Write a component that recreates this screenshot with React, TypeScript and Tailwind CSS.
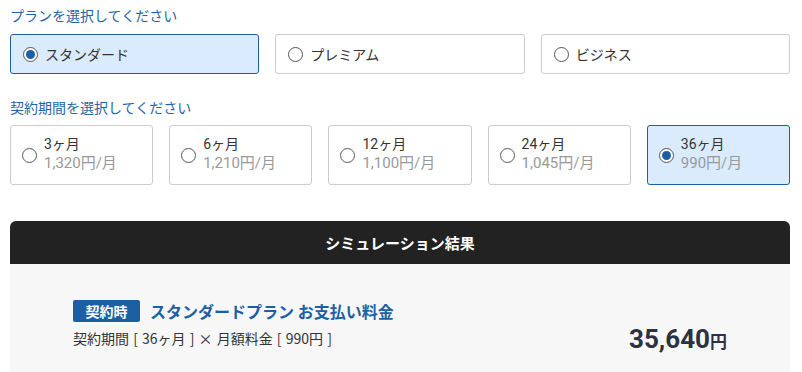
import React from "react";

const font = { fontFamily: '"Noto Sans CJK JP", "Noto Sans", sans-serif' };
const roboto = { fontFamily: '"Roboto", "Noto Sans CJK JP", sans-serif' };

function Radio({ checked }: { checked: boolean }) {
  return (
    <span className="flex h-[15px] w-[15px] shrink-0 items-center justify-center rounded-full border border-[#555] bg-white">
      {checked && <span className="h-[9px] w-[9px] rounded-full bg-[#1c5fa3]" />}
    </span>
  );
}

const plans = [
  { label: "スタンダード", checked: true },
  { label: "プレミアム", checked: false },
  { label: "ビジネス", checked: false },
];

const periods = [
  { label: "3ヶ月", price: "1,320円/月", checked: false },
  { label: "6ヶ月", price: "1,210円/月", checked: false },
  { label: "12ヶ月", price: "1,100円/月", checked: false },
  { label: "24ヶ月", price: "1,045円/月", checked: false },
  { label: "36ヶ月", price: "990円/月", checked: true },
];

export default function App() {
  return (
    <div className="w-[802px] h-[372px] overflow-hidden bg-white pl-[10px] pt-[5px]" style={font}>
      <div className="w-[780px]">
        <div className="text-[14px] leading-[20px] text-[#1f64a8]">プランを選択してください</div>
        <div className="mt-[9px] grid grid-cols-3 gap-[16px]">
          {plans.map((p) => (
            <div
              key={p.label}
              className={`flex h-[40px] items-center gap-[7px] rounded-[3px] border pl-[12px] text-[14px] leading-[20px] text-[#333] ${
                p.checked ? "border-[#1c5fa3] bg-[#d9ebfc]" : "border-[#ccc] bg-white"
              }`}
            >
              <Radio checked={p.checked} />
              <span>{p.label}</span>
            </div>
          ))}
        </div>

        <div className="mt-[23px] text-[14px] leading-[20px] text-[#1f64a8]">契約期間を選択してください</div>
        <div className="mt-[8px] grid grid-cols-5 gap-[16px]">
          {periods.map((p) => (
            <div
              key={p.label}
              className={`flex h-[60px] items-center gap-[7px] rounded-[3px] border pl-[11px] ${
                p.checked ? "border-[#1c5fa3] bg-[#d9ebfc]" : "border-[#ccc] bg-white"
              }`}
              style={roboto}
            >
              <Radio checked={p.checked} />
              <div className="flex flex-col -mt-[2px]">
                <span className="text-[14px] leading-[18px] text-[#333]">{p.label}</span>
                <span className="text-[15px] leading-[20px] text-[#999]">{p.price}</span>
              </div>
            </div>
          ))}
        </div>

        <div className="mt-[36px] flex h-[43px] items-center justify-center rounded-t-[6px] bg-[#222] text-[15px] leading-[20px] font-bold text-white">
          シミュレーション結果
        </div>
        <div className="flex h-[120px] items-start justify-between bg-[#f7f7f7] pl-[63px] pr-[63px] pt-[36px]">
          <div className="flex flex-col">
            <div className="flex items-center gap-[10px]">
              <span className="flex h-[22px] w-[67px] items-center justify-center rounded-[2px] bg-[#1c5fa3] text-[14px] leading-[20px] font-bold text-white">
                契約時
              </span>
              <span className="text-[16px] leading-[22px] font-bold text-[#1c5fa3]">スタンダードプラン お支払い料金</span>
            </div>
            <div className="mt-[6px] text-[14px] leading-[20px] text-[#333] [word-spacing:1px]">
              契約期間 [ 36ヶ月 ] × 月額料金 [ 990円 ]
            </div>
          </div>
          <div className="mt-[24px] flex items-baseline text-[#2d3142] font-bold" style={roboto}>
            <span className="text-[26px] leading-[30px]">35,640</span>
            <span className="text-[17px]">円</span>
          </div>
        </div>
      </div>
    </div>
  );
}
